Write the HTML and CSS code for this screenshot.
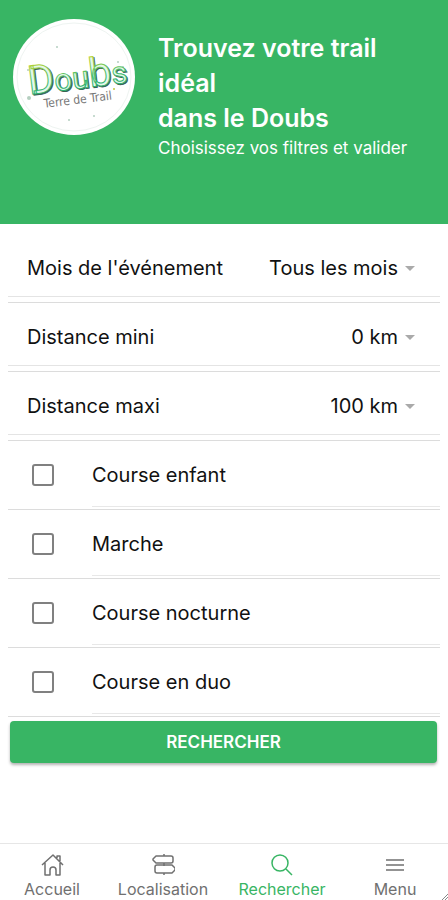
FILE: index.html
```
<!DOCTYPE html>
<html lang="fr">

<head>
    <meta charset="UTF-8">
    <meta name="viewport" content="width=device-width, initial-scale=1.0">
    <title>Doubs Terre de Trail</title>
    <link rel="stylesheet" href="styles.css">
</head>

<body>
    <header class="header">
        <svg class="logo" viewBox="0 0 122 116" role="img" aria-label="Doubs Terre de Trail">
            <ellipse cx="61" cy="58" rx="61" ry="58" fill="#fff" />
            <ellipse cx="61" cy="58" rx="57" ry="54" fill="none" stroke="#eef4f1" />
            <g fill="#b5cfc0">
                <circle cx="105" cy="43" r="1" />
                <circle cx="110" cy="48" r="1" />
                <circle cx="108" cy="55" r="1" />
                <circle cx="114" cy="53" r="1" />
                <circle cx="101" cy="70" r="1" fill="#c3c93c" />
                <circle cx="15" cy="51" r="1" />
                <circle cx="56" cy="101" r="1" />
                <circle cx="81" cy="97" r="1" />
                <circle cx="16" cy="79" r="2" />
                <circle cx="44" cy="28" r="1" />
            </g>
            <defs>
                <linearGradient id="green" x1="0" y1="0" x2="0" y2="1">
                    <stop offset="0.1" stop-color="#c3d42c" />
                    <stop offset="0.5" stop-color="#4fc06c" />
                    <stop offset="0.9" stop-color="#20a873" />
                </linearGradient>
            </defs>
            <g transform="rotate(-7 61 60)">
                <text class="logo-shadow" x="16" y="71"><tspan class="big">D</tspan>ou<tspan class="big">b</tspan>s</text>
                <text class="logo-name" x="15" y="70"><tspan class="big">D</tspan>ou<tspan class="big">b</tspan>s</text>
                <text class="logo-sub" x="28" y="85">Terre de Trail</text>
            </g>
        </svg>
        <div class="intro">
            <h1>Trouvez votre trail idéal<br>dans le Doubs</h1>
            <p>Choisissez vos filtres et valider</p>
        </div>
    </header>

    <main>
        <form>
            <div class="row">
                <div class="filter">
                    <label for="mois">Mois de l'événement</label>
                    <select id="mois">
                        <option>Tous les mois</option>
                        <option>Janvier</option>
                        <option>Février</option>
                        <option>Mars</option>
                    </select>
                </div>
            </div>
            <div class="row">
                <div class="filter">
                    <label for="mini">Distance mini</label>
                    <select id="mini">
                        <option>0 km</option>
                        <option>10 km</option>
                        <option>20 km</option>
                    </select>
                </div>
            </div>
            <div class="row">
                <div class="filter">
                    <label for="maxi">Distance maxi</label>
                    <select id="maxi">
                        <option>100 km</option>
                        <option>50 km</option>
                        <option>20 km</option>
                    </select>
                </div>
            </div>

            <div class="row check">
                <input type="checkbox" id="enfant">
                <label for="enfant">Course enfant</label>
            </div>
            <div class="row check">
                <input type="checkbox" id="marche">
                <label for="marche">Marche</label>
            </div>
            <div class="row check">
                <input type="checkbox" id="nocturne">
                <label for="nocturne">Course nocturne</label>
            </div>
            <div class="row check">
                <input type="checkbox" id="duo">
                <label for="duo">Course en duo</label>
            </div>

            <button type="button" class="search">RECHERCHER</button>
        </form>
    </main>

    <nav class="tabs">
        <a href="#">
            <svg viewBox="0 0 24 24">
                <path d="M2 12 13 2l10 10M5 10v12h5v-5q0-3 3-3t3 3v5h4V10M17 5V3h3v5" />
            </svg>
            Accueil
        </a>
        <a href="#">
            <svg viewBox="0 0 24 24">
                <path d="M13 1v2M13 10v3M13 20v2M5 3h15q2 0 2 2v3q0 2-2 2H5L2 7V6zM6 12h15l3 3v2l-3 3H6q-2 0-2-2v-4q0-2 2-2z" />
            </svg>
            Localisation
        </a>
        <a href="#" class="active">
            <svg viewBox="0 0 24 24">
                <circle cx="10" cy="10" r="8" />
                <path d="m16 16 6 6" />
            </svg>
            Rechercher
        </a>
        <a href="#">
            <svg viewBox="0 0 24 24">
                <path d="M3 7h18M3 12h18M3 17h18" />
            </svg>
            Menu
        </a>
    </nav>
    <svg class="corner" viewBox="0 0 6 6">
        <path d="M0 6 6 0M3 6l3-3" />
    </svg>
</body>

</html>
```
FILE: styles.css
```
* {
    box-sizing: border-box;
}

body {
    margin: 0;
    min-height: 100vh;
    display: flex;
    flex-direction: column;
    position: relative;
    background: #fff;
    color: #111;
    font-family: Inter, "Open Sans", sans-serif;
    font-size: 20px;
}

/**** HEADER ****/

.header {
    display: flex;
    gap: 23px;
    min-height: 224px;
    padding: 19px 32px 40px 13px;
    background: #38b564;
    color: #fff;
}

.logo {
    flex: none;
    width: 122px;
    height: 116px;
}

.logo-name,
.logo-shadow {
    font-family: Roboto, sans-serif;
    font-size: 31px;
}

.logo .big {
    font-size: 40px;
}

.logo-name {
    fill: #e4f8e9;
    stroke: url(#green);
    stroke-width: 1px;
}

.logo-shadow {
    fill: #3d6354;
    stroke: #3d6354;
}

.logo-sub {
    font-family: "DejaVu Sans Condensed", "Open Sans", sans-serif;
    font-size: 12px;
    fill: #777;
}

.intro {
    padding-top: 12px;
}

.intro h1 {
    margin: 0;
    font-size: 25px;
    line-height: 35px;
    font-weight: 600;
}

.intro p {
    margin: 0;
    font-size: 17px;
    line-height: 24px;
}

/**** FORM ****/

main {
    flex: 1;
    padding: 10px 8px 20px;
}

.row {
    height: 69px;
    border-bottom: 1px solid #dcdcdc;
}

.filter {
    display: flex;
    align-items: center;
    justify-content: space-between;
    height: 63px;
    padding: 6px 25px 0 19px;
    border-bottom: 1px solid #e4e4e4;
}

.filter::after {
    content: "";
    margin-left: 7px;
    border: 5px solid transparent;
    border-top-color: #aaa;
    border-bottom: 0;
}

.filter select {
    margin-left: auto;
    padding: 0;
    appearance: none;
    border: 0;
    background: none;
    color: inherit;
    font: inherit;
    text-align-last: right;
}

.check {
    display: flex;
    align-items: flex-start;
}

.check input {
    appearance: none;
    flex: none;
    width: 22px;
    height: 22px;
    margin: 23px 38px 0 24px;
    border: 2px solid #808080;
    border-radius: 3px;
}

.check input:checked {
    background: #38b564;
}

.check label {
    flex: 1;
    height: 66px;
    padding-top: 3px;
    line-height: 62px;
    border-bottom: 1px solid #e8e8e8;
}

.search {
    display: block;
    width: calc(100% - 5px);
    height: 42px;
    margin: 4px 3px 0 2px;
    border: 0;
    border-radius: 4px;
    background: #38b564;
    box-shadow: 0 2px 3px rgba(0, 0, 0, 0.3);
    color: #fff;
    font-family: inherit;
    font-size: 17px;
    font-weight: 600;
}

/**** TABS ****/

.tabs {
    display: grid;
    grid-template-columns: 52fr 59fr 60fr 53fr;
    height: 57px;
    border-top: 1px solid #e6e6e6;
}

.tabs a {
    display: flex;
    flex-direction: column;
    align-items: center;
    padding-top: 9px;
    color: #707070;
    font-size: 16px;
    line-height: 24px;
    text-decoration: none;
}

.tabs .active {
    color: #38b564;
}

.tabs svg {
    width: 24px;
    height: 24px;
    fill: none;
    stroke: currentColor;
    stroke-width: 1.5px;
    stroke-linejoin: round;
}

.corner {
    position: absolute;
    right: 0;
    bottom: 0;
    width: 6px;
    height: 6px;
    stroke: #888;
}
```
